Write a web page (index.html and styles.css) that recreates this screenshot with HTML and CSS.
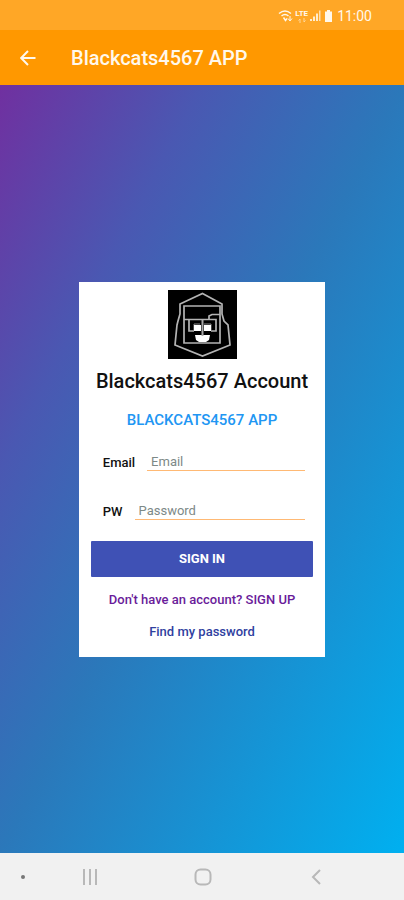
FILE: index.html
```html
<!DOCTYPE html>
<html lang="en">
<head>
<meta charset="utf-8">
<meta name="viewport" content="width=device-width, initial-scale=1">
<title>Blackcats4567 APP</title>
<link rel="stylesheet" href="styles.css">
</head>
<body>
<div class="status-bar">
  <svg width="16" height="16" viewBox="0 0 16 16" aria-hidden="true">
    <g fill="none" stroke="currentColor" stroke-width="1.5">
      <path d="M1 5.500Q7 0.500 13 5.500M3.500 8Q7 5 10.500 8"/>
      <path d="M5.500 9.500L7.500 12.500L9 10.500"/>
      <path d="M10 10.500l2 2.500 2-2.500M12 8v4" stroke-width="1"/>
    </g>
  </svg>
  <div class="network">
    <span class="network-type">LTE</span>
    <svg width="10" height="5" viewBox="0 0 10 5" fill="none" stroke="currentColor" opacity=".6" aria-hidden="true"><path d="M3 5V1L1.500 2.500M7 0v4l1.500-1.500"/></svg>
  </div>
  <svg width="27" height="16" viewBox="34 0 27 16" fill="currentColor" aria-hidden="true">
    <path d="M35 11h2v2H35zM38 8.500h2V13H38zM41 5.500h2V13H41z" opacity=".85"/>
    <path d="M44 2.500H45.500V13H44z" opacity=".7"/>
    <path d="M52 2h3v1.500h2V14h-7V3.500H52z"/>
  </svg>
  <time class="clock">11:00</time>
</div>
<header class="app-bar">
  <button class="back" type="button" aria-label="Back">
    <svg width="16" height="16" viewBox="0 0 16 16" fill="none" stroke="currentColor" stroke-width="2" aria-hidden="true"><path d="M15.500 8H1.500M8 1L1.200 8L8 15"/></svg>
  </button>
  <h1 class="app-title">Blackcats4567 APP</h1>
</header>
<main class="content">
  <form class="card">
    <svg class="logo" width="69" height="69" viewBox="0 0 69 69" role="img" aria-label="Blackcats4567 logo">
      <path fill="#000" d="M0 0h69v69H0z"/>
      <g fill="none" stroke="#b4b4b4" stroke-width="1.700">
        <path d="M34.500 3.500L54 14V24L56 31L60 35L62 55L34.500 66L7 55L9 35L10 31L12 24V14Z"/>
        <path d="M16 16H52V53H16Z"/>
        <path d="M16 29.500H48V41H43M41 29.500V26L44 24.500H52M21 29.500V41H26"/>
        <path d="M26 41V34H32M36 34H43V41" stroke="#888" stroke-width="1"/>
      </g>
      <path fill="#fff" d="M26 35h7v6h-7zM36 35h7v6h-7zM27 45h15l-1 5-3 2h-7l-3-2z"/>
      <path d="M34.500 30V46" stroke="#aaa" stroke-width="2"/>
    </svg>
    <h2 class="card-title">Blackcats4567 Account</h2>
    <p class="subtitle">BLACKCATS4567 APP</p>
    <div class="field">
      <label for="email">Email</label>
      <input id="email" type="email" placeholder="Email">
    </div>
    <div class="field">
      <label for="password">PW</label>
      <input id="password" type="password" placeholder="Password">
    </div>
    <button class="sign-in" type="button">SIGN IN</button>
    <a class="link link-signup" href="#signup">Don't have an account? SIGN UP</a>
    <a class="link link-find" href="#find">Find my password</a>
  </form>
</main>
<nav class="nav-bar" aria-label="System">
  <button type="button" aria-label="Hide bar"><span class="dot"></span></button>
  <button type="button" aria-label="Recent apps"><svg width="16" height="16" viewBox="0 0 16 16" stroke="currentColor" stroke-width="2" aria-hidden="true"><path d="M2 0v16M8 0v16M14 0v16"/></svg></button>
  <button type="button" aria-label="Home"><svg width="18" height="18" viewBox="0 0 18 18" fill="none" stroke="currentColor" stroke-width="2" aria-hidden="true"><rect x="1.500" y="1.500" width="15" height="15" rx="5"/></svg></button>
  <button type="button" aria-label="Back"><svg width="10" height="16" viewBox="0 0 10 16" fill="none" stroke="currentColor" stroke-width="2" aria-hidden="true"><path d="M9 1L2 8l7 7"/></svg></button>
</nav>
</body>
</html>
```
FILE: styles.css
```css
* {
  box-sizing: border-box;
}

body {
  display: flex;
  flex-direction: column;
  min-height: 100vh;
  margin: 0;
  font-family: Roboto, "Liberation Sans", sans-serif;
}

button {
  padding: 0;
  border: 0;
  background: none;
  color: inherit;
  font: inherit;
}

svg {
  display: block;
}

.status-bar {
  display: flex;
  align-items: center;
  justify-content: flex-end;
  gap: 1px;
  height: 30px;
  padding: 2px 32px 0 0;
  background: #ffa726;
  color: #fff8ec;
}

.network {
  display: flex;
  flex-direction: column;
  align-items: center;
}

.network-type {
  font-size: 8px;
  font-weight: 700;
  line-height: 8px;
}

.clock {
  font-size: 14px;
  line-height: 16px;
}

.app-bar {
  display: flex;
  align-items: center;
  gap: 35px;
  height: 55px;
  padding: 0 20px;
  background: #ff9800;
  color: #fff8ec;
}

.app-title {
  margin: 0;
  font-size: 20px;
  font-weight: 500;
  line-height: 24px;
}

.content {
  display: flex;
  flex: 1;
  align-items: center;
  justify-content: center;
  background: linear-gradient(to bottom right, #7030a0, #4a58b2 25%, #2b78ba 50%, #00b0f0);
}

.card {
  display: flex;
  flex-direction: column;
  align-items: center;
  width: 61%;
  min-width: 246px;
  padding: 8px 12px 16px;
  background: #fff;
}

.card-title {
  margin: 10px 0 0;
  color: #111;
  font-size: 20px;
  font-weight: 500;
  line-height: 24px;
}

.subtitle {
  margin: 17px 0 0;
  color: #2196f3;
  font-size: 15px;
  font-weight: 500;
  line-height: 20px;
}

.field {
  display: flex;
  align-items: center;
  align-self: stretch;
  gap: 12px;
  height: 49px;
  padding: 0 8px 0 12px;
  color: #111;
  font-size: 13px;
  font-weight: 500;
}

.subtitle + .field {
  margin-top: 8px;
}

.field input {
  flex: 1;
  min-width: 0;
  height: 18px;
  padding: 0 4px;
  border: 0;
  border-bottom: 1px solid #ffb974;
  border-radius: 0;
  background: none;
  font: 400 13px/16px Roboto, "Liberation Sans", sans-serif;
}

.field input::placeholder {
  color: #7d8987;
}

.sign-in {
  align-self: stretch;
  height: 36px;
  margin-top: 5px;
  border-radius: 1px;
  background: #3f51b5;
  color: #fff;
  font-size: 13px;
  font-weight: 700;
}

.link {
  margin-top: 14px;
  font-size: 13px;
  font-weight: 500;
  line-height: 18px;
  text-decoration: none;
}

.link-signup {
  color: #6a1b9a;
}

.link-find {
  color: #303f9f;
}

.nav-bar {
  display: grid;
  grid-template-columns: 46fr 88fr 138fr 88fr 44fr;
  align-items: center;
  justify-items: center;
  height: 47px;
  background: #f1f1f1;
  color: #b8b8b8;
}

.dot {
  display: block;
  width: 4px;
  height: 4px;
  border-radius: 50%;
  background: #777;
}
```
